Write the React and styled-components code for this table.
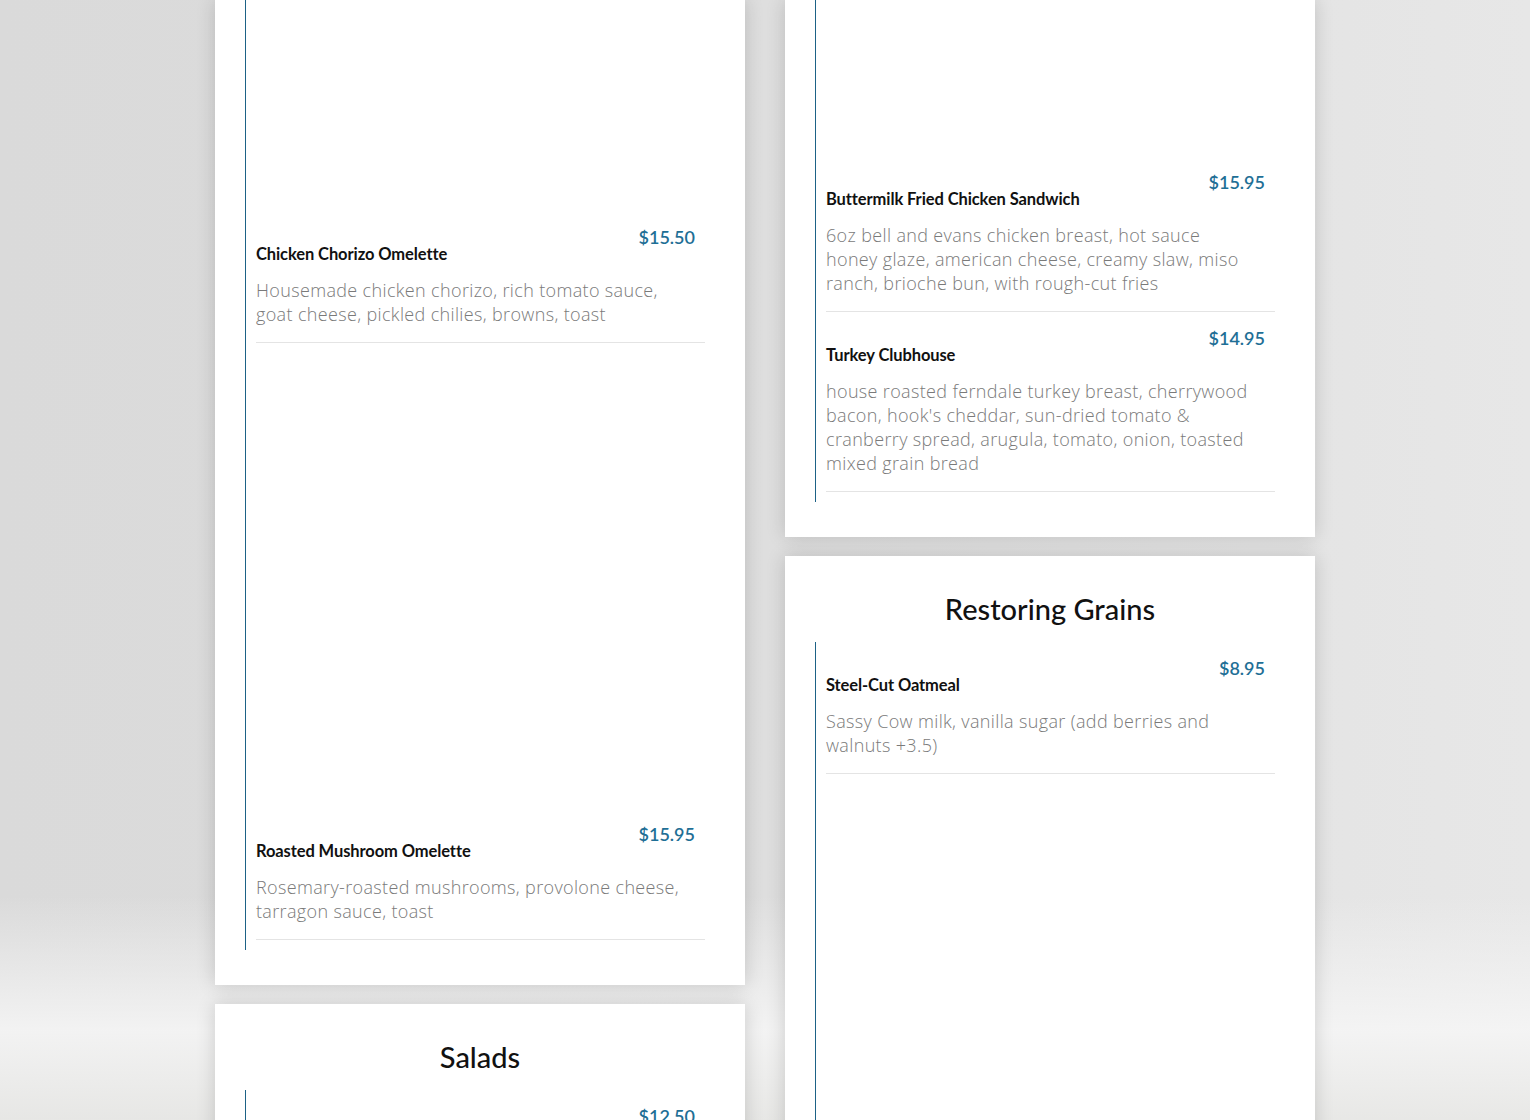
import React from "react";
import styled, { createGlobalStyle } from "styled-components";

const Global = createGlobalStyle`
  html, body {
    margin: 0;
    padding: 0;
    height: 100%;
    overflow: hidden;
  }
  body {
    background:
      linear-gradient(180deg, rgba(255,255,255,0) 0%, rgba(255,255,255,0) 80%, rgba(245,245,245,0.9) 92%, rgba(232,232,230,0.9) 100%),
      linear-gradient(90deg, #dadada 0%, #dcdcdc 40%, #e2e2e2 70%, #e7e7e7 100%);
  }
`;

const Page = styled.div`
  display: grid;
  grid-template-columns: 530px 530px;
  justify-content: center;
  column-gap: 40px;
  align-items: start;
  height: 1120px;
  overflow: hidden;
`;

const Column = styled.div`
  display: flex;
  flex-direction: column;
  gap: 19px;
`;

const Card = styled.section`
  background: #fff;
  box-shadow: 0 0 18px rgba(0, 0, 0, 0.16);
  padding: ${(p) => (p.$cut ? "0" : "35px")} 40px 35px 30px;
`;

const Heading = styled.h2`
  margin: 0 0 15px 10px;
  font-family: "Lato", "Open Sans", sans-serif;
  font-weight: 500;
  font-size: 29px;
  line-height: 36px;
  text-align: center;
  color: #111;
`;

const List = styled.div`
  border-left: 1px solid #1d6286;
  padding: 0 0 10px 10px;
`;

const Item = styled.article`
  padding-top: 15px;
  border-bottom: 1px solid #e4e4e4;
  padding-bottom: 16px;
`;

const Photo = styled.div`
  height: ${(p) => p.$h}px;
`;

const Head = styled.div`
  display: flex;
  justify-content: space-between;
  align-items: flex-start;
  padding-right: 10px;
`;

const Title = styled.h3`
  margin: 17px 0 0;
  font-family: "Lato", "Open Sans", sans-serif;
  font-weight: 700;
  font-size: 16.5px;
  line-height: 22px;
  color: #111;
  letter-spacing: -0.1px;
`;

const Price = styled.span`
  font-family: "Lato", "Open Sans", sans-serif;
  font-weight: 600;
  font-size: 18px;
  line-height: 22px;
  color: #1f6f96;
`;

const Desc = styled.p`
  margin: 13px 0 0;
  max-width: 425px;
  font-family: "Open Sans", "Lato", sans-serif;
  font-weight: 300;
  font-size: 18px;
  letter-spacing: 0.35px;
  line-height: 24px;
  color: #7a7a7a;
`;

function MenuItem({ photo, name, price, desc }) {
  return (
    <Item>
      {photo ? <Photo $h={photo} /> : null}
      <Head>
        <Title>{name}</Title>
        <Price>{price}</Price>
      </Head>
      {desc ? <Desc>{desc}</Desc> : null}
    </Item>
  );
}

export default function App() {
  return (
    <>
      <Global />
      <Page>
        <Column>
          <Card $cut>
            <List>
              <MenuItem
                photo={211}
                name="Chicken Chorizo Omelette"
                price="$15.50"
                desc="Housemade chicken chorizo, rich tomato sauce, goat cheese, pickled chilies, browns, toast"
              />
              <MenuItem
                photo={465}
                name="Roasted Mushroom Omelette"
                price="$15.95"
                desc="Rosemary-roasted mushrooms, provolone cheese, tarragon sauce, toast"
              />
            </List>
          </Card>
          <Card>
            <Heading>Salads</Heading>
            <List>
              <MenuItem name="" price="$12.50" desc="" />
            </List>
          </Card>
        </Column>
        <Column>
          <Card $cut>
            <List>
              <MenuItem
                photo={156}
                name="Buttermilk Fried Chicken Sandwich"
                price="$15.95"
                desc="6oz bell and evans chicken breast, hot sauce honey glaze, american cheese, creamy slaw, miso ranch, brioche bun, with rough-cut fries"
              />
              <MenuItem
                name="Turkey Clubhouse"
                price="$14.95"
                desc="house roasted ferndale turkey breast, cherrywood bacon, hook's cheddar, sun-dried tomato & cranberry spread, arugula, tomato, onion, toasted mixed grain bread"
              />
            </List>
          </Card>
          <Card>
            <Heading>Restoring Grains</Heading>
            <List>
              <MenuItem
                name="Steel-Cut Oatmeal"
                price="$8.95"
                desc="Sassy Cow milk, vanilla sugar (add berries and walnuts +3.5)"
              />
              <MenuItem photo={465} name="" price="" desc="" />
            </List>
          </Card>
        </Column>
      </Page>
    </>
  );
}
